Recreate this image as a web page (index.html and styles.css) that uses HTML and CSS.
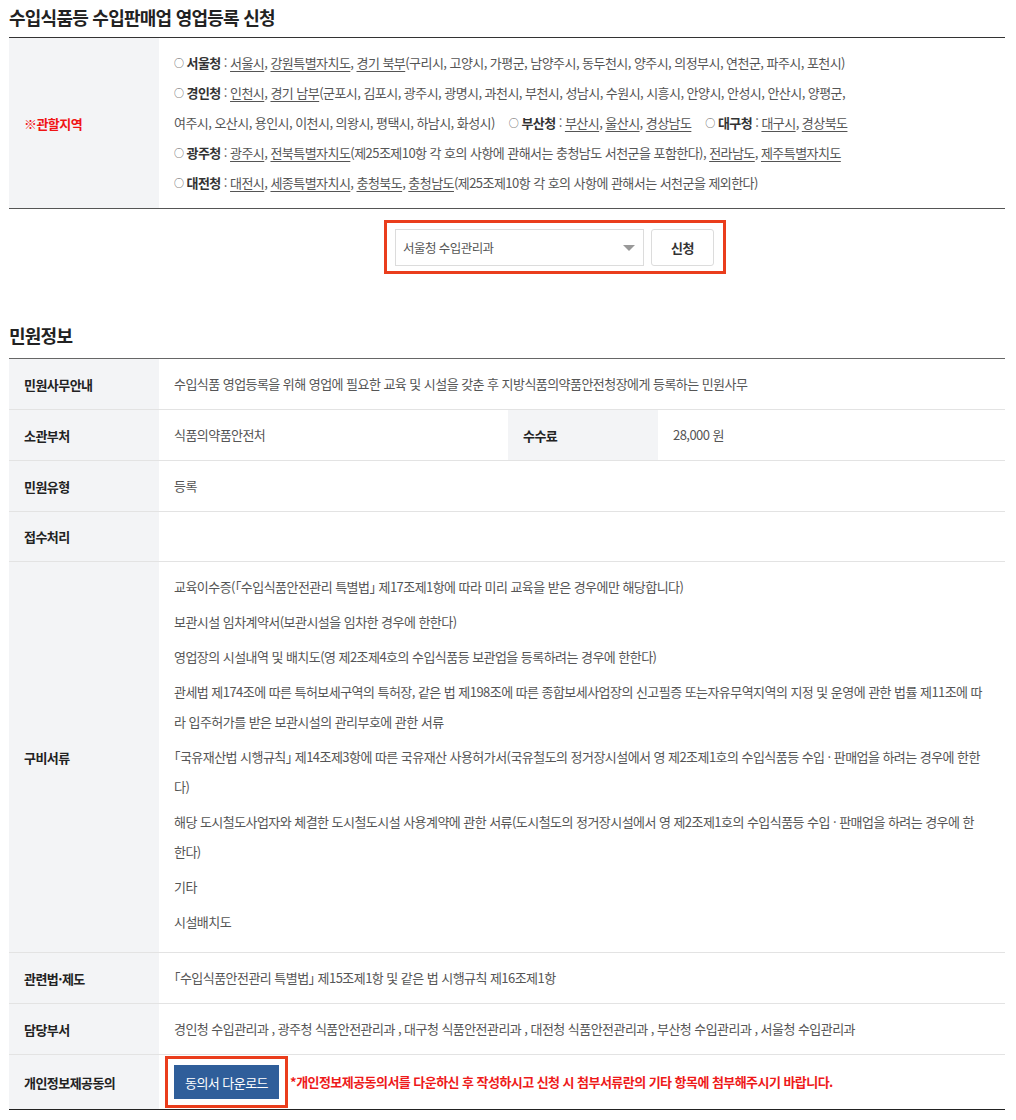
FILE: index.html
```html
<!DOCTYPE html>
<html lang="ko">
<head>
<meta charset="utf-8">
<title>수입식품등 수입판매업 영업등록 신청</title>
<link rel="stylesheet" href="styles.css">
</head>
<body>
<div class="page">
  <h2 class="sec-title first">수입식품등 수입판매업 영업등록 신청</h2>
  <table class="tbl tbl-area">
    <colgroup><col class="c-th"><col></colgroup>
    <tr>
      <th class="warn">※관할지역</th>
      <td>
        <div class="area-line"><span class="dot">○</span> <b>서울청</b> : <u>서울시</u>, <u>강원특별자치도</u>, <u>경기 북부</u>(구리시, 고양시, 가평군, 남양주시, 동두천시, 양주시, 의정부시, 연천군, 파주시, 포천시)</div>
        <div class="area-line"><span class="dot">○</span> <b>경인청</b> : <u>인천시</u>, <u>경기 남부</u>(군포시, 김포시, 광주시, 광명시, 과천시, 부천시, 성남시, 수원시, 시흥시, 안양시, 안성시, 안산시, 양평군,</div>
        <div class="area-line">여주시, 오산시, 용인시, 이천시, 의왕시, 평택시, 하남시, 화성시)<span class="grp"><span class="dot">○</span> <b>부산청</b> : <u>부산시</u>, <u>울산시</u>, <u>경상남도</u></span><span class="grp"><span class="dot">○</span> <b>대구청</b> : <u>대구시</u>, <u>경상북도</u></span></div>
        <div class="area-line"><span class="dot">○</span> <b>광주청</b> : <u>광주시</u>, <u>전북특별자치도</u>(제25조제10항 각 호의 사항에 관해서는 충청남도 서천군을 포함한다), <u>전라남도</u>, <u>제주특별자치도</u></div>
        <div class="area-line"><span class="dot">○</span> <b>대전청</b> : <u>대전시</u>, <u>세종특별자치시</u>, <u>충청북도</u>, <u>충청남도</u>(제25조제10항 각 호의 사항에 관해서는 서천군을 제외한다)</div>
      </td>
    </tr>
  </table>

  <div class="apply">
    <div class="apply-box">
      <div class="select">
        <span class="select-text">서울청 수입관리과</span>
        <span class="caret"></span>
      </div>
      <button class="btn-apply" type="button">신청</button>
    </div>
  </div>

  <h2 class="sec-title second">민원정보</h2>
  <table class="tbl tbl-info">
    <colgroup><col class="c-th"><col class="c-td"><col class="c-th"><col></colgroup>
    <tr>
      <th>민원사무안내</th>
      <td colspan="3">수입식품 영업등록을 위해 영업에 필요한 교육 및 시설을 갖춘 후 지방식품의약품안전청장에게 등록하는 민원사무</td>
    </tr>
    <tr>
      <th>소관부처</th>
      <td>식품의약품안전처</td>
      <th>수수료</th>
      <td>28,000 원</td>
    </tr>
    <tr>
      <th>민원유형</th>
      <td colspan="3">등록</td>
    </tr>
    <tr>
      <th>접수처리</th>
      <td colspan="3"></td>
    </tr>
    <tr>
      <th>구비서류</th>
      <td colspan="3" class="docs">
        <p>교육이수증(「수입식품안전관리 특별법」 제17조제1항에 따라 미리 교육을 받은 경우에만 해당합니다)</p>
        <p>보관시설 임차계약서(보관시설을 임차한 경우에 한한다)</p>
        <p>영업장의 시설내역 및 배치도(영 제2조제4호의 수입식품등 보관업을 등록하려는 경우에 한한다)</p>
        <p>관세법 제174조에 따른 특허보세구역의 특허장, 같은 법 제198조에 따른 종합보세사업장의 신고필증 또는자유무역지역의 지정 및 운영에 관한 법률 제11조에 따라 입주허가를 받은 보관시설의 관리부호에 관한 서류</p>
        <p>「국유재산법 시행규칙」 제14조제3항에 따른 국유재산 사용허가서(국유철도의 정거장시설에서 영 제2조제1호의 수입식품등 수입 · 판매업을 하려는 경우에 한한다)</p>
        <p>해당 도시철도사업자와 체결한 도시철도시설 사용계약에 관한 서류(도시철도의 정거장시설에서 영 제2조제1호의 수입식품등 수입 · 판매업을 하려는 경우에 한<br>한다)</p>
        <p>기타</p>
        <p>시설배치도</p>
      </td>
    </tr>
    <tr>
      <th>관련법·제도</th>
      <td colspan="3">「수입식품안전관리 특별법」 제15조제1항 및 같은 법 시행규칙 제16조제1항</td>
    </tr>
    <tr>
      <th>담당부서</th>
      <td colspan="3">경인청 수입관리과 , 광주청 식품안전관리과 , 대구청 식품안전관리과 , 대전청 식품안전관리과 , 부산청 수입관리과 , 서울청 수입관리과</td>
    </tr>
    <tr class="last">
      <th>개인정보제공동의</th>
      <td colspan="3" class="consent">
        <button class="btn-down" type="button">동의서 다운로드</button>
        <span class="notice">*개인정보제공동의서를 다운하신 후 작성하시고 신청 시 첨부서류란의 기타 항목에 첨부해주시기 바랍니다.</span>
      </td>
    </tr>
  </table>
</div>
</body>
</html>
```

FILE: styles.css
```css
* { box-sizing: border-box; }

body {
  margin: 0;
  background: #fff;
  font-family: "Noto Sans CJK KR", "Noto Sans", sans-serif;
  font-size: 13px;
  color: #555;
  letter-spacing: -0.55px;
  font-feature-settings: "halt";
}

.page {
  width: 1016px;
  padding: 0 11px 0 9px;
}

.sec-title {
  margin: 0;
  font-size: 18px;
  line-height: 26px;
  font-weight: 700;
  color: #222;
  letter-spacing: -0.75px;
}
.sec-title.first { padding-top: 4px; margin-bottom: 7px; }
.sec-title.second { margin-top: 48px; margin-bottom: 10px; }

.tbl {
  width: 100%;
  border-collapse: collapse;
  table-layout: fixed;
}
.tbl .c-th { width: 150px; }
.tbl .c-td { width: 349px; }

.tbl th {
  background: #f3f4f6;
  text-align: left;
  font-weight: 700;
  color: #222;
  padding: 0 15px;
  vertical-align: middle;
}
.tbl td {
  padding: 10px 15px;
  line-height: 30px;
  vertical-align: middle;
}

.tbl-area { border-top: 1px solid #333; border-bottom: 1px solid #555; }
.tbl-area th.warn { color: #f01414; }
.tbl-area b { color: #333; font-weight: 700; }
.tbl-area u { text-decoration: underline; text-underline-offset: 3px; }
.area-line { white-space: nowrap; height: 30px; }
.grp { margin-left: 14px; }
.dot { font-size: 10px; line-height: 0; color: #555; vertical-align: 1px; }

.tbl-info { border-top: 1px solid #666; border-bottom: 1px solid #222; }
.tbl-info tr { border-bottom: 1px solid #e3e3e3; }
.tbl-info tr.last { border-bottom: 1px solid #222; }
.tbl-info th { height: 50px; }
.tbl-info tr.last th { height: 54px; }

.docs { padding: 8px 15px 14px; }
.docs p { margin: 0 0 5px; }

.apply {
  display: flex;
  margin-top: 11px;
  padding-left: 375px;
}
.apply-box {
  display: flex;
  gap: 7px;
  border: 3px solid #ea3d1c;
  padding: 6px 9px 5px 8px;
}
.select {
  width: 249px;
  height: 37px;
  border: 1px solid #dcdcdc;
  background: #fff;
  display: flex;
  align-items: center;
  justify-content: space-between;
  padding: 0 8px 0 7px;
  font-size: 12.5px;
  color: #555;
}
.caret {
  width: 0;
  height: 0;
  border-left: 6px solid transparent;
  border-right: 6px solid transparent;
  border-top: 6px solid #999;
}
.btn-apply {
  width: 63px;
  height: 37px;
  border: 1px solid #dcdcdc;
  border-radius: 3px;
  background: #fff;
  font-family: inherit;
  font-size: 13px;
  font-weight: 700;
  color: #333;
  letter-spacing: -0.55px;
}

.consent { padding: 10px 15px; line-height: 34px; }
.btn-down {
  height: 34px;
  width: 105px;
  border: 0;
  background: #2f5e9a;
  color: #fff;
  font-family: inherit;
  font-size: 13px;
  letter-spacing: -0.55px;
  vertical-align: middle;
  outline: 3px solid #ea3d1c;
  outline-offset: 6px;
}
.notice {
  color: #ee1a1a;
  font-weight: 700;
  margin-left: 8px;
  vertical-align: middle;
}
```
